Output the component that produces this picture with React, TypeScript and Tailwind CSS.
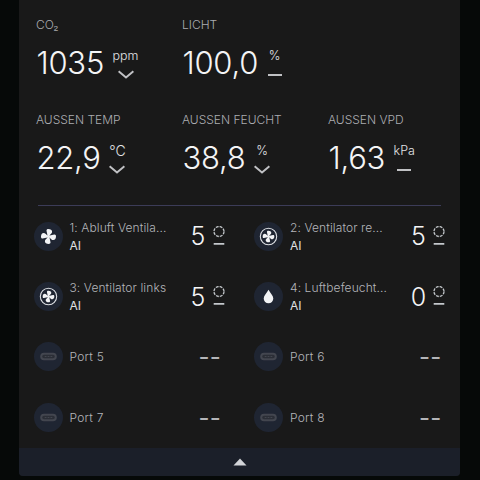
import React from 'react';

type Trend = 'down' | 'flat';
type PortIcon = 'fan' | 'fanRing' | 'drop' | 'plug';

interface Reading {
  label: string;
  value: string;
  unit: string;
  trend: Trend;
}

interface Port {
  name: string;
  icon: PortIcon;
  mode?: string;
  level?: number;
}

const topReadings: Reading[] = [
  { label: 'CO₂', value: '1035', unit: 'ppm', trend: 'down' },
  { label: 'LICHT', value: '100,0', unit: '%', trend: 'flat' },
];

const outsideReadings: Reading[] = [
  { label: 'AUSSEN TEMP', value: '22,9', unit: '°C', trend: 'down' },
  { label: 'AUSSEN FEUCHT', value: '38,8', unit: '%', trend: 'down' },
  { label: 'AUSSEN VPD', value: '1,63', unit: 'kPa', trend: 'flat' },
];

const ports: Port[] = [
  { name: '1: Abluft Ventila...', icon: 'fan', mode: 'AI', level: 5 },
  { name: '2: Ventilator re...', icon: 'fanRing', mode: 'AI', level: 5 },
  { name: '3: Ventilator links', icon: 'fanRing', mode: 'AI', level: 5 },
  { name: '4: Luftbefeucht...', icon: 'drop', mode: 'AI', level: 0 },
  { name: 'Port 5', icon: 'plug' },
  { name: 'Port 6', icon: 'plug' },
  { name: 'Port 7', icon: 'plug' },
  { name: 'Port 8', icon: 'plug' },
];

// Straight left edge, rounded outer right edge
const BLADE = 'M-0.8 0 L-2 -5.8 C-2.1 -7 -1.3 -7.5 -0.2 -7.5 C2 -7.5 3.6 -6.6 3.6 -4.8 C3.6 -3.2 2.4 -2.8 1.2 -1.2 L0.8 0 Z';

const Blades = () => (
  <>
    {[0, 90, 180, 270].map((angle) => (
      <path key={angle} d={BLADE} transform={`rotate(${angle})`} />
    ))}
  </>
);

const Icon: React.FC<{ icon: PortIcon }> = ({ icon }) => (
  <svg viewBox="-14.5 -14.5 29 29" className="w-[29px] h-[29px]" fill="#f2f3f5">
    {icon === 'fan' && <Blades />}
    {icon === 'fanRing' && (
      <>
        <circle r="8.2" fill="none" stroke="#dcdee2" strokeWidth="1.1" />
        <g transform="scale(0.78)">
          <Blades />
        </g>
      </>
    )}
    {icon === 'drop' && <path d="M0 -6.8 C1.6 -3.8 4.8 -1 4.8 2 A4.8 4.8 0 0 1 -4.8 2 C-4.8 -1 -1.6 -3.8 0 -6.8 Z" />}
    {icon === 'plug' && (
      <>
        <rect x="-7.3" y="-2.8" width="14.6" height="5.6" rx="2.8" fill="#2b2e36" stroke="#43464f" strokeWidth="2" />
        <path d="M-3.8 0 H3.8" stroke="#43464f" strokeWidth="1.2" strokeDasharray="1.8 1.1" />
      </>
    )}
  </svg>
);

const ReadingCell: React.FC<{ reading: Reading }> = ({ reading }) => (
  <div className="w-[146px] shrink-0">
    <p className="text-[12px] leading-4 font-light text-[#abacb1]">{reading.label}</p>
    <div className="flex mt-[10px] pl-[0.5px]">
      <span className="text-[31px] leading-[40px] font-light tracking-[-0.25px] text-[#f4f4f5]">{reading.value}</span>
      <div className="flex flex-col items-center ml-[8.5px] pt-[5px]">
        <span className={`leading-4 font-light text-[#e2e3e6] ${reading.unit === '°C' ? 'text-[14px]' : 'text-[12.5px]'}`}>
          {reading.unit}
        </span>
        <svg viewBox="0 0 16 10" className="w-4 h-[10px] mt-[6px]" fill="none" stroke="#c0c1c4" strokeWidth="2">
          {reading.trend === 'down' ? <path d="M0.6 1.2 L8 7.4 L15.4 1.2" /> : <path d="M1 5 H15" />}
        </svg>
      </div>
    </div>
  </div>
);

const PortCell: React.FC<{ port: Port }> = ({ port }) => (
  <div className="flex items-center">
    <div className="w-[29px] h-[29px] rounded-full bg-[#1f2532]">
      <Icon icon={port.icon} />
    </div>
    <div className={`w-[116px] ml-[7px] text-[12px] whitespace-nowrap ${port.mode ? '' : 'pt-px'}`}>
      <p className={`leading-[18px] font-light text-[#b4b5ba] ${port.mode ? 'tracking-[0.1px]' : 'tracking-[0.25px]'}`}>{port.name}</p>
      {port.mode && <p className="leading-[17px] text-[#e0e1e4]">{port.mode}</p>}
    </div>
    {port.level !== undefined ? (
      <>
        <span className="w-[24px] pl-px text-center text-[25px] leading-[30px] font-light text-[#f4f4f5]">{port.level}</span>
        <svg viewBox="0 0 12 20" className="w-3 h-5 ml-[3px] mb-px" fill="none" stroke="#c4c8cc">
          <circle cx="6" cy="5.5" r="5" strokeWidth="1.3" strokeDasharray="2.9 1.03" />
          <path d="M0.7 17.8 H11.3" strokeWidth="1.7" />
        </svg>
      </>
    ) : (
      <span className="ml-[13px] pt-px text-[24px] leading-[30px] tracking-[0.2px] text-[#b4b5b8]">--</span>
    )}
  </div>
);

const App: React.FC = () => (
  <div className="w-[480px] h-[480px] overflow-hidden bg-[#060908] font-['Inter',sans-serif]">
    <div className="flex flex-col w-[441px] h-[476px] ml-[19px] rounded-b-[4px] overflow-hidden bg-[#191919]">
      {/* Sensor readings */}
      <div className="h-[205px] pl-[17px] pt-[17px]">
        <div className="flex h-[95px]">
          {topReadings.map((reading) => (
            <ReadingCell key={reading.label} reading={reading} />
          ))}
        </div>
        <div className="flex">
          {outsideReadings.map((reading) => (
            <ReadingCell key={reading.label} reading={reading} />
          ))}
        </div>
      </div>
      <div className="h-px mx-[19px] bg-[#3c3c58]" />

      {/* Ports */}
      <div className="grid grid-cols-[220.5px_220.5px] grid-rows-[repeat(4,60.4px)] h-[242px] pl-[14.5px]">
        {ports.map((port) => (
          <PortCell key={port.name} port={port} />
        ))}
      </div>

      {/* Collapse bar */}
      <div className="flex flex-1 items-center justify-center bg-[#1b1f29]">
        <svg viewBox="0 0 14 8" className="w-[14px] h-2" fill="#d2d4d8">
          <path d="M7 0.5 L13.5 7.5 H0.5 Z" />
        </svg>
      </div>
    </div>
  </div>
);

export default App;
